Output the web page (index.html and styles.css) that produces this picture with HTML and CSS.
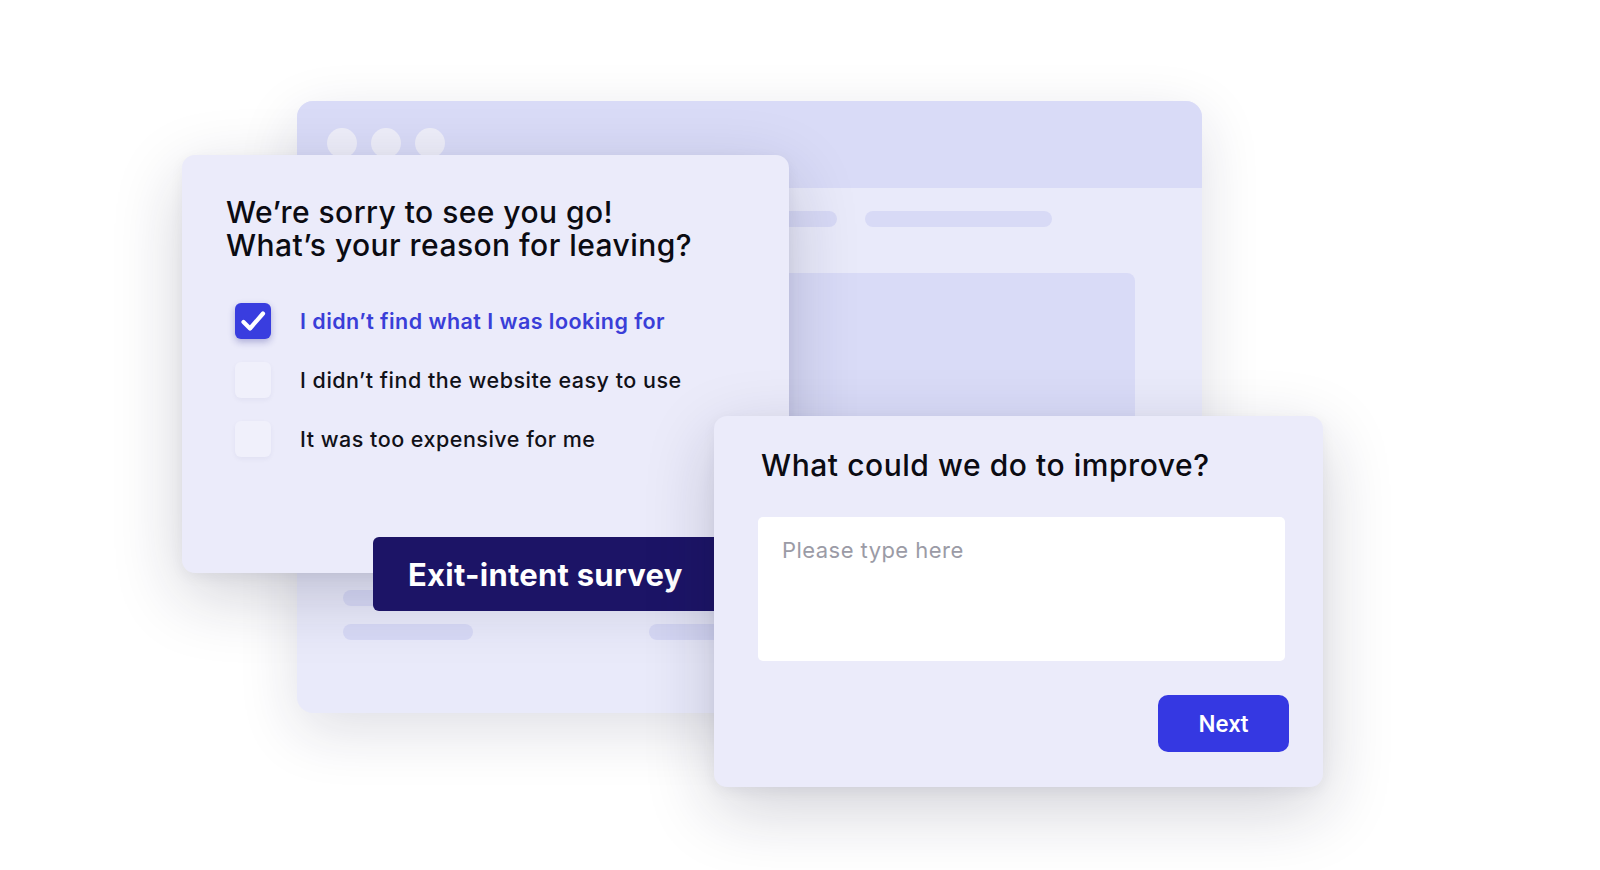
FILE: index.html
```html
<!DOCTYPE html>
<html lang="en">
<head>
<meta charset="utf-8">
<title>Exit-intent survey</title>
<link rel="stylesheet" href="styles.css">
</head>
<body>
<div class="stage">
  <div class="browser">
    <div class="browser-head">
      <span class="dot"></span><span class="dot"></span><span class="dot"></span>
    </div>
    <div class="browser-body">
      <div class="bar-row top-bars">
        <span class="bar bar-a"></span>
        <span class="bar bar-b"></span>
      </div>
      <div class="block"></div>
      <div class="bar-row low-1">
        <span class="bar bar-c"></span>
      </div>
      <div class="bar-row low-2">
        <span class="bar bar-d"></span>
        <span class="bar bar-e"></span>
      </div>
    </div>
  </div>

  <div class="card card-reasons">
    <h2 class="reasons-title"><span class="title-line">We’re sorry to see you go!</span><span class="title-line">What’s your reason for leaving?</span></h2>
    <ul class="options">
      <li class="option checked">
        <span class="box">
          <svg viewBox="0 0 36 36" width="36" height="36"><path d="M8.5 19 L15 25.5 L28 10.5" fill="none" stroke="#fff" stroke-width="4.2" stroke-linecap="round" stroke-linejoin="round"/></svg>
        </span>
        <span class="opt-text">I didn’t find what I was looking for</span>
      </li>
      <li class="option">
        <span class="box"></span>
        <span class="opt-text">I didn’t find the website easy to use</span>
      </li>
      <li class="option">
        <span class="box"></span>
        <span class="opt-text">It was too expensive for me</span>
      </li>
    </ul>
  </div>

  <div class="tag">Exit-intent survey</div>

  <div class="card card-improve">
    <h2 class="improve-title">What could we do to improve?</h2>
    <div class="textarea"><span class="placeholder">Please type here</span></div>
    <div class="actions"><span class="btn-next">Next</span></div>
  </div>
</div>
</body>
</html>
```
FILE: styles.css
```css
* { box-sizing: border-box; }
html, body {
  margin: 0;
  padding: 0;
  background: #ffffff;
}
body {
  width: 1600px;
  height: 870px;
  overflow: hidden;
  font-family: "Inter", "Open Sans", "Liberation Sans", sans-serif;
  color: #0d0d14;
}
.stage {
  position: relative;
  width: 1600px;
  height: 870px;
  overflow: hidden;
  background: #ffffff;
}

/* back browser window */
.browser {
  position: absolute;
  left: 297px;
  top: 101px;
  width: 905px;
  height: 612px;
  border-radius: 16px;
  overflow: hidden;
  background: #e9eafa;
  box-shadow: 0 18px 60px rgba(30, 30, 70, 0.14);
  display: flex;
  flex-direction: column;
}
.browser-head {
  height: 87px;
  flex: 0 0 87px;
  background: #d9dbf7;
  display: flex;
  align-items: flex-start;
  gap: 14px;
  padding: 27px 0 0 30px;
}
.dot {
  width: 30px;
  height: 30px;
  border-radius: 50%;
  background: #eeeef9;
}
.browser-body {
  flex: 1;
  display: flex;
  flex-direction: column;
  padding-top: 23px;
}
.bar-row {
  display: flex;
  gap: 28px;
  height: 16px;
}
.bar {
  display: block;
  height: 16px;
  border-radius: 8px;
  background: #d8daf6;
}
.top-bars { padding-left: 400px; }
.bar-a { width: 140px; }
.bar-b { width: 187px; }
.block {
  margin: 46px 0 0 470px;
  width: 368px;
  height: 230px;
  border-radius: 8px;
  background: #d9dbf7;
}
.low-1 {
  margin-top: 87px;
  padding-left: 46px;
}
.bar-c { width: 220px; }
.low-2 {
  margin-top: 18px;
  padding-left: 46px;
  gap: 176px;
}
.bar-d { width: 130px; }
.bar-e { width: 160px; }

/* cards */
.card {
  position: absolute;
  background: #ebebfa;
  border-radius: 13px;
  box-shadow: 0 22px 70px rgba(25, 25, 60, 0.2), 0 4px 14px rgba(25, 25, 60, 0.05);
}
.card-reasons {
  left: 182px;
  top: 155px;
  width: 607px;
  height: 418px;
  padding: 41px 30px 0 44px;
}
.reasons-title {
  margin: 0;
  font-size: 30px;
  font-weight: 500;
  letter-spacing: 0.45px;
  color: #0b0b12;
  display: flex;
  flex-direction: column;
}
.title-line {
  display: block;
  height: 33px;
  line-height: 33px;
  white-space: nowrap;
}
.options {
  list-style: none;
  margin: 41px 0 0 0;
  padding: 0 0 0 9px;
  display: flex;
  flex-direction: column;
  gap: 23px;
}
.option {
  display: flex;
  align-items: center;
  gap: 29px;
  height: 36px;
}
.box {
  width: 36px;
  height: 36px;
  flex: 0 0 36px;
  border-radius: 6px;
  background: #f0f0fb;
  box-shadow: 0 2px 5px rgba(40, 40, 90, 0.05);
}
.box svg { display: block; }
.checked .box {
  background: #393ddf;
  box-shadow: 0 3px 7px rgba(30, 30, 140, 0.3);
}
.opt-text {
  font-size: 21.5px;
  font-weight: 500;
  letter-spacing: 0.5px;
  color: #111118;
  white-space: nowrap;
}
.checked .opt-text {
  color: #3a3ed8;
  font-weight: 600;
  letter-spacing: 0.45px;
}

/* label */
.tag {
  position: absolute;
  left: 373px;
  top: 537px;
  width: 360px;
  height: 74px;
  border-radius: 6px;
  background: #1c1466;
  color: #ffffff;
  font-size: 31px;
  font-weight: 700;
  letter-spacing: 0.25px;
  display: flex;
  align-items: center;
  padding-left: 35px;
  white-space: nowrap;
}

/* improve card */
.card-improve {
  left: 714px;
  top: 416px;
  width: 609px;
  height: 371px;
  padding: 32px 38px 0 44px;
  display: flex;
  flex-direction: column;
}
.improve-title {
  margin: 0;
  padding-left: 3px;
  font-size: 30px;
  line-height: 34px;
  font-weight: 500;
  letter-spacing: 0.55px;
  color: #0b0b12;
  white-space: nowrap;
}
.textarea {
  margin-top: 35px;
  width: 527px;
  height: 144px;
  background: #ffffff;
  border-radius: 5px;
  padding: 20px 24px;
}
.placeholder {
  font-size: 22px;
  letter-spacing: 0.45px;
  color: #9b9ba6;
}
.actions {
  margin-top: 34px;
  display: flex;
  justify-content: flex-end;
  width: 531px;
}
.btn-next {
  width: 131px;
  height: 57px;
  border-radius: 10px;
  background: #3538e2;
  color: #ffffff;
  font-family: "Roboto", "Liberation Sans", sans-serif;
  font-weight: 500;
  font-size: 24px;
  display: flex;
  align-items: center;
  justify-content: center;
}
```
